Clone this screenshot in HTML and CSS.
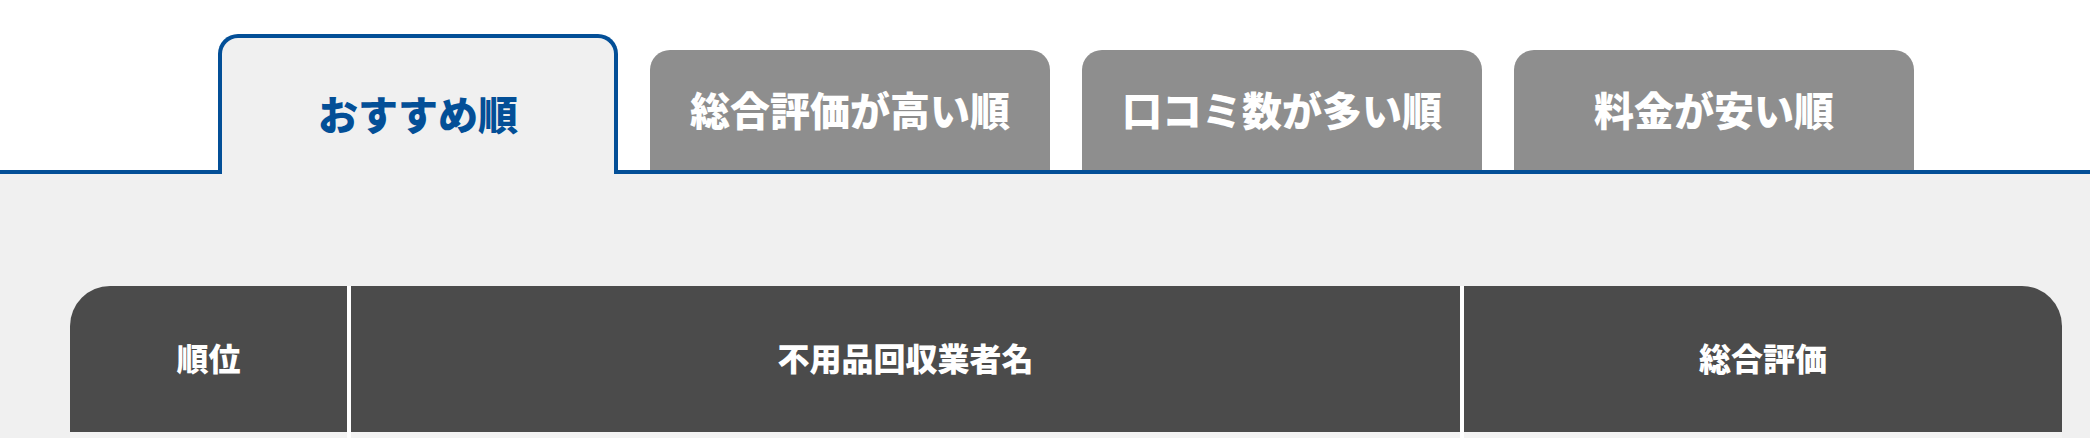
FILE: index.html
```html
<!DOCTYPE html>
<html lang="ja">
<head>
<meta charset="utf-8">
<title>ランキング</title>
<link rel="stylesheet" href="styles.css">
</head>
<body>
<div class="tabs">
  <div class="tab tab-active">おすすめ順</div>
  <div class="tab">総合評価が高い順</div>
  <div class="tab">口コミ数が多い順</div>
  <div class="tab">料金が安い順</div>
</div>
<div class="panel">
  <div class="table">
    <div class="row head">
      <div class="cell c1">順位</div>
      <div class="cell c2">不用品回収業者名</div>
      <div class="cell c3">総合評価</div>
    </div>
    <div class="row body">
      <div class="cell c1"></div>
      <div class="cell c2"></div>
      <div class="cell c3"></div>
    </div>
  </div>
</div>
</body>
</html>
```
FILE: styles.css
```css
html, body {
  margin: 0;
  padding: 0;
  background: #ffffff;
  font-family: "Noto Sans CJK JP", "Noto Sans", sans-serif;
  overflow: hidden;
}

.tabs {
  display: flex;
  align-items: flex-end;
  gap: 32px;
  padding: 34px 0 0 218px;
  border-bottom: 4px solid #034f97;
  height: 136px;
}

.tab {
  box-sizing: border-box;
  width: 400px;
  height: 120px;
  display: flex;
  align-items: center;
  justify-content: center;
  background: #8e8e8e;
  color: #ffffff;
  font-size: 40px;
  font-weight: 900;
  line-height: 1;
  border-radius: 20px 20px 0 0;
  padding-bottom: 3px;
}

.tab-active {
  height: 140px;
  margin-bottom: -4px;
  background: #f0f0f0;
  color: #034f97;
  border: 4px solid #034f97;
  border-bottom: none;
  padding-top: 14px;
  padding-bottom: 0;
}

.panel {
  background: #f0f0f0;
  padding: 112px 0 0 70px;
}

.table {
  width: 1992px;
}

.row {
  display: flex;
}

.cell {
  box-sizing: border-box;
  display: flex;
  align-items: center;
  justify-content: center;
  font-size: 32px;
  font-weight: 900;
  color: #ffffff;
  line-height: 1;
}

.c1 { width: 277px; }
.c2 { width: 1113px; border-left: 4px solid #ffffff; }
.c3 { width: 602px; border-left: 4px solid #ffffff; }

.head .cell {
  height: 146px;
  background: #4b4b4b;
  padding-bottom: 4px;
}

.head .c1 { border-top-left-radius: 40px; }
.head .c3 { border-top-right-radius: 40px; }

.body .cell {
  height: 6px;
  background: #f3f3f3;
}
```
